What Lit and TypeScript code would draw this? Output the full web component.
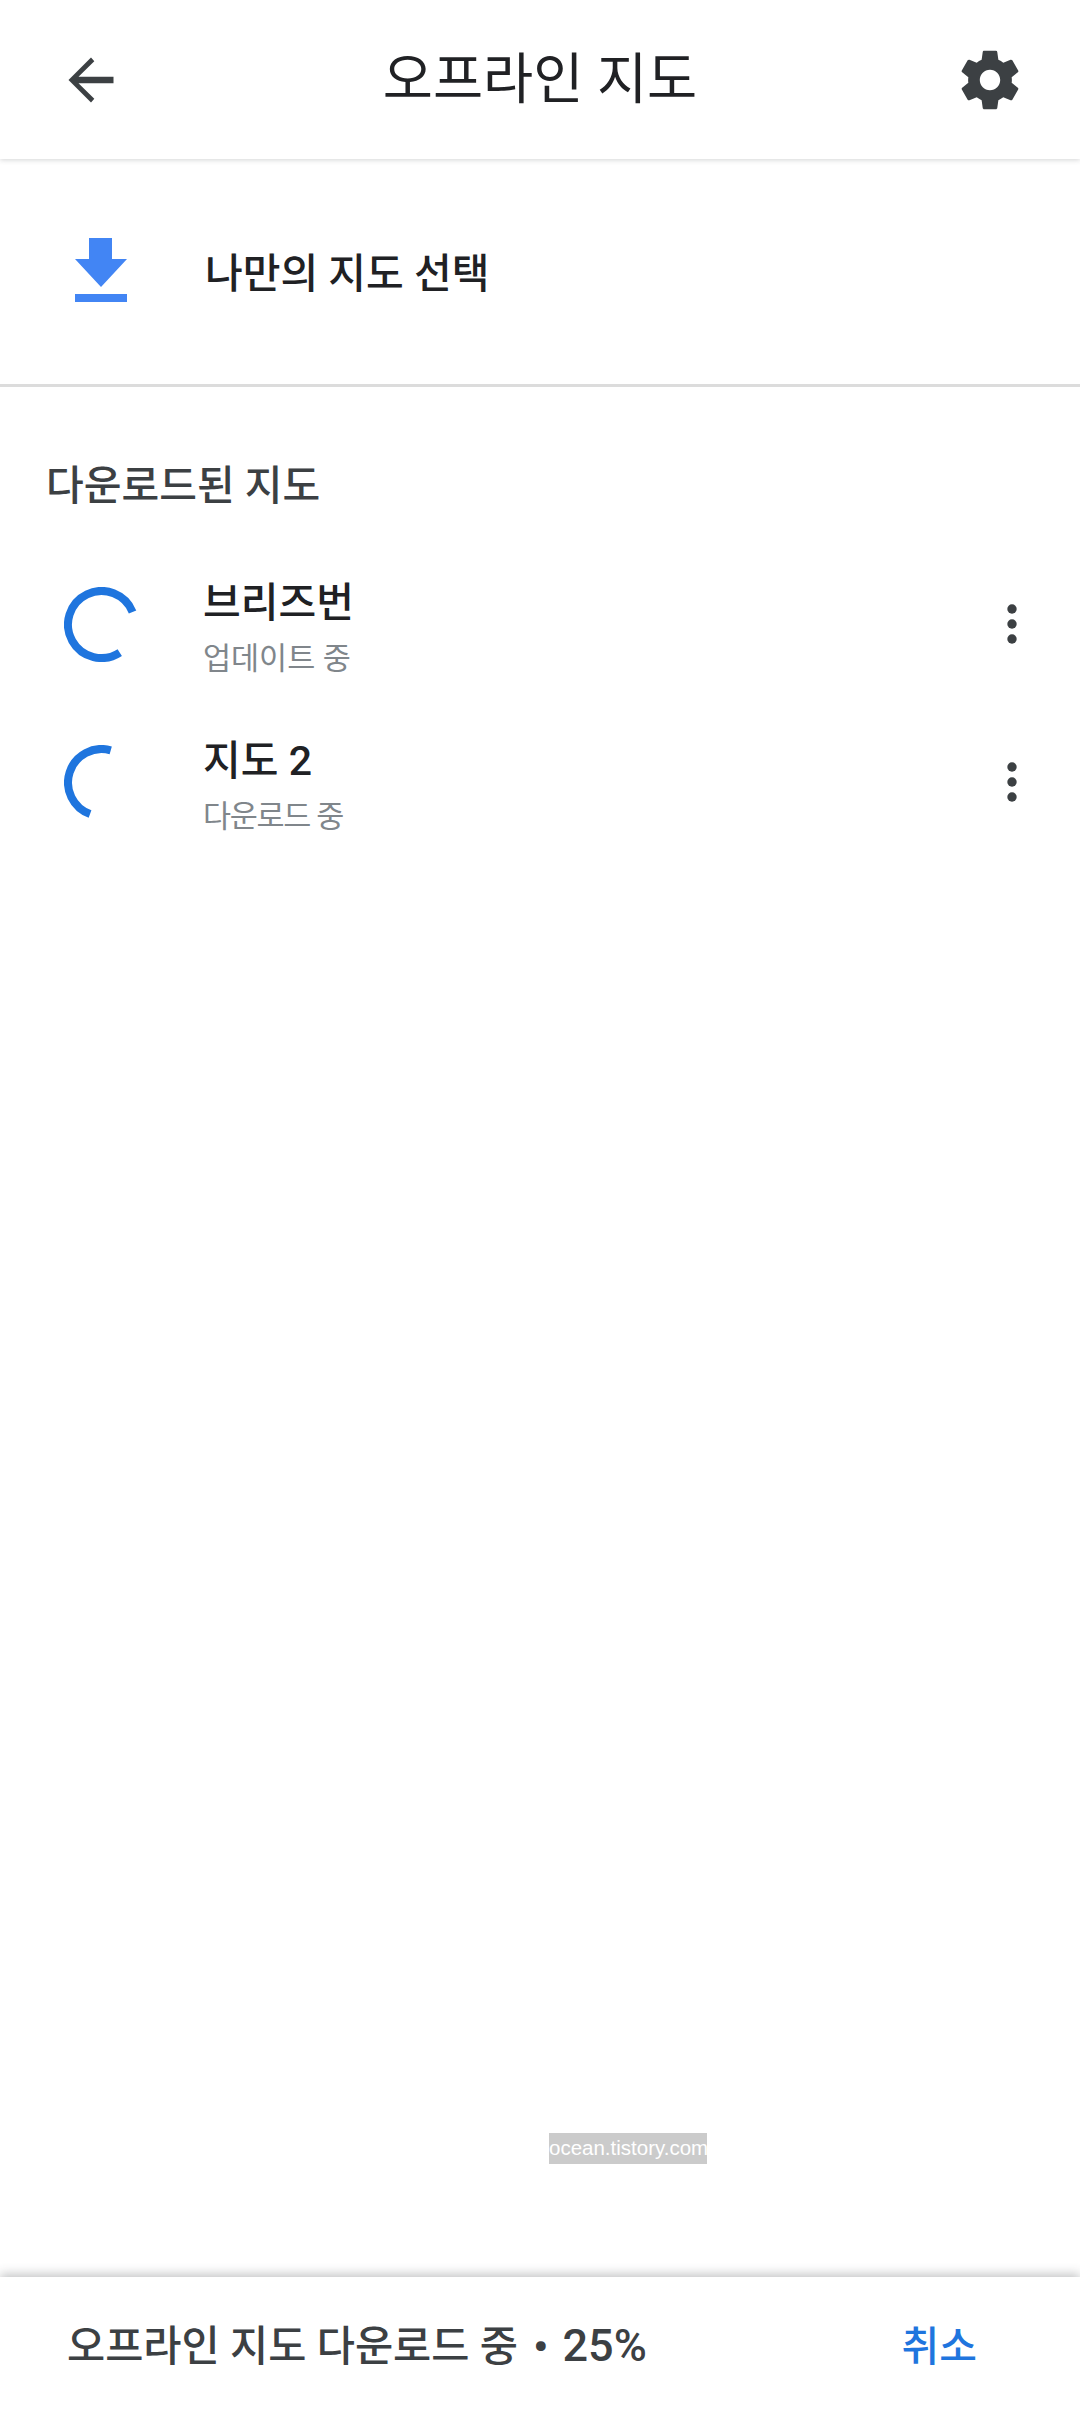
import { LitElement, html, css, svg } from "lit";
import { customElement } from "lit/decorators.js";

const arc = (from: number, to: number) => {
  const r = 33.5;
  const p = (a: number) => {
    const t = (a * Math.PI) / 180;
    return `${(37.5 + r * Math.cos(t)).toFixed(2)} ${(37.5 + r * Math.sin(t)).toFixed(2)}`;
  };
  const sweep = (from - to + 720) % 360;
  const large = sweep > 180 ? 1 : 0;
  return svg`<path d="M${p(from)} A${r} ${r} 0 ${large} 0 ${p(to)}" fill="none" stroke="#1f75de" stroke-width="8"/>`;
};

const maps = [
  { name: "브리즈번", status: "업데이트 중", from: -22, to: 57, cls: "status" },
  { name: "지도 2", status: "다운로드 중", from: -74, to: 110, cls: "status narrow" },
];

@customElement("app-root")
export class AppRoot extends LitElement {
  static styles = css`
    :host {
      display: flex;
      flex-direction: column;
      position: relative;
      width: 1080px;
      height: 2412px;
      background: #fff;
      overflow: hidden;
      font-family: Roboto, "Noto Sans CJK KR", "Noto Sans", sans-serif;
      color: #202124;
    }
    .header {
      height: 159px;
      flex: none;
      box-sizing: border-box;
      display: flex;
      align-items: center;
      justify-content: space-between;
      padding: 0 55px 0 67px;
      box-shadow: 0 1px 5px rgba(60, 64, 67, 0.22);
      position: relative;
    }
    .title {
      position: absolute;
      left: 0;
      right: 0;
      top: 40px;
      text-align: center;
      font-size: 54.5px;
      line-height: 78px;
      font-weight: 400;
    }
    .header svg { display: block; position: relative; }
    .pick {
      height: 228px;
      flex: none;
      box-sizing: border-box;
      display: flex;
      align-items: center;
      gap: 78px;
      padding: 0 0 3px 75px;
      border-bottom: 3px solid #dcdcdc;
      font-size: 41px;
      font-weight: 500;
    }
    .heading {
      margin: 0;
      padding: 69px 0 0 46px;
      font-size: 41px;
      line-height: 60px;
      font-weight: 500;
      color: #3c4043;
    }
    .list {
      display: flex;
      flex-direction: column;
      gap: 8px;
      padding: 33px 0 0 0;
    }
    .row {
      display: flex;
      align-items: center;
      height: 150px;
      padding: 0 62px 0 64px;
    }
    .spin { flex: none; display: block; }
    .txt { flex: 1; padding: 9px 0 0 64px; }
    .name { font-size: 41px; line-height: 61px; font-weight: 500; }
    .status { font-size: 30.5px; line-height: 50px; color: #80868b; }
    .narrow { letter-spacing: -1.300px; }
    .dots { flex: none; display: block; }
    .spacer { flex: 1; }
    .mark {
      position: absolute;
      left: 549px;
      top: 2133px;
      width: 158px;
      height: 31px;
      background: #cbcbcb;
      color: #fff;
      font-family: "Liberation Sans", sans-serif;
      font-size: 20.5px;
      line-height: 29px;
      text-align: center;
      white-space: nowrap;
      overflow: hidden;
    }
    .bar {
      flex: none;
      height: 135px;
      box-sizing: border-box;
      display: flex;
      align-items: center;
      justify-content: space-between;
      padding: 0 103px 3px 67px;
      box-shadow: 0 -3px 10px rgba(60, 64, 67, 0.3);
      font-size: 41.5px;
      font-weight: 500;
      color: #3c4043;
      position: relative;
    }
    .bullet { margin: 0 4px 0 5px; font-weight: 700; }
    .pct { font-size: 45px; font-weight: 500; }
    .cancel { color: #1f75de; font-size: 41px; }
  `;

  render() {
    return html`
      <div class="header">
        <svg width="48" height="48" viewBox="0 0 48 48"><path d="M46.500 20.700H11.500l15.800-15.500L24 1.500 1.500 24 24 46.500l3.300-3.700L11.500 27.300H46.500z" fill="#3c4043"/></svg>
        <div class="title">오프라인 지도</div>
        <svg width="70" height="70" viewBox="0 0 24 24"><path fill="#3c4043" d="M19.430 12.980c.04-.32.07-.64.07-.98s-.03-.66-.07-.98l2.110-1.650c.19-.15.24-.42.12-.64l-2-3.460c-.12-.22-.39-.3-.61-.22l-2.490 1c-.52-.4-1.080-.73-1.690-.98l-.38-2.650A.488.488 0 0 0 14 2h-4c-.25 0-.46.18-.49.42l-.38 2.650c-.61.25-1.170.59-1.690.98l-2.490-1c-.23-.09-.49 0-.61.22l-2 3.460c-.13.22-.07.49.12.64l2.110 1.650c-.04.32-.07.65-.07.98s.03.66.07.98l-2.110 1.650c-.19.15-.24.42-.12.64l2 3.460c.12.22.39.3.61.22l2.490-1c.52.4 1.080.73 1.690.98l.38 2.650c.03.24.24.42.49.42h4c.25 0 .46-.18.49-.42l.38-2.650c.61-.25 1.170-.59 1.690-.98l2.490 1c.23.09.49 0 .61-.22l2-3.460c.12-.22.07-.49-.12-.64l-2.110-1.650zM12 15.500c-1.930 0-3.500-1.570-3.500-3.500s1.570-3.500 3.500-3.500 3.500 1.570 3.500 3.500-1.570 3.500-3.500 3.500z"/></svg>
      </div>
      <div class="pick">
        <svg width="52" height="64" viewBox="0 0 52 64"><path fill="#4285f4" d="M14 0h23v21h15L26 49 0 21h14zM0 56h52v8H0z"/></svg>
        <span>나만의 지도 선택</span>
      </div>
      <h2 class="heading">다운로드된 지도</h2>
      <div class="list">
        ${maps.map(
          (m) => html`
            <div class="row">
              <svg class="spin" width="75" height="75" viewBox="0 0 75 75">${arc(m.from, m.to)}</svg>
              <div class="txt">
                <div class="name">${m.name}</div>
                <div class=${m.cls}>${m.status}</div>
              </div>
              <svg class="dots" width="12" height="40" viewBox="0 0 12 40" fill="#3c4043"><circle cx="6" cy="5" r="4.700"/><circle cx="6" cy="20" r="4.700"/><circle cx="6" cy="35" r="4.700"/></svg>
            </div>
          `
        )}
      </div>
      <div class="spacer"></div>
      <div class="mark">ocean.tistory.com</div>
      <div class="bar">
        <span>오프라인 지도 다운로드 중 <span class="bullet">•</span> <span class="pct">25%</span></span>
        <span class="cancel">취소</span>
      </div>
    `;
  }
}
